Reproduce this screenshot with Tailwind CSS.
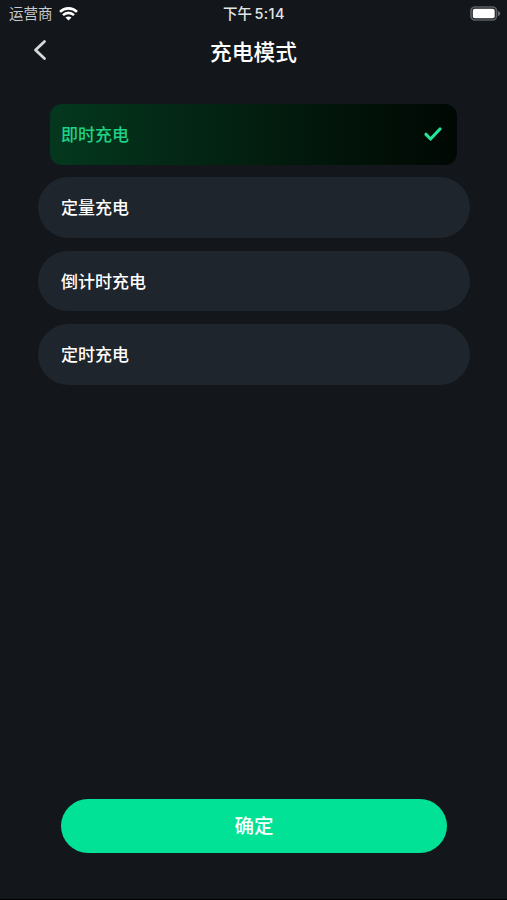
<!DOCTYPE html>
<html lang="zh-CN">
<head>
    <meta charset="UTF-8">
    <meta name="viewport" content="width=device-width, initial-scale=1.0">
    <title>充电模式</title>
    <script src="https://cdn.jsdelivr.net/npm/@tailwindcss/browser@4"></script>
</head>
<body class="bg-[#13171b] text-white font-['Inter','Noto_Sans_CJK_SC',sans-serif] h-screen overflow-hidden flex flex-col border-b border-black">

    <!-- status bar -->
    <div class="grid grid-cols-3 items-center h-[27px] pl-[9px] pr-[6px] text-[14.5px] leading-none shrink-0">
        <div class="flex items-center gap-[6px] text-[#c9cbcd]">
            <span class="pt-[2px]">运营商</span>
            <svg class="w-[19px] h-[14px]" viewBox="0 0 19 14" fill="none" stroke="#fff" stroke-width="2.6">
                <path d="M1 4.9C5.8.2 13.2.2 18 4.9" />
                <path d="M4 8.1c3.1-3 7.9-3 11 0" />
                <path d="M9.5 13.5 6.5 10.5c1.7-1.5 4.3-1.5 6 0z" fill="#fff" stroke="none" />
            </svg>
        </div>
        <time class="text-center text-[#e4e5e6] font-medium text-[14.5px] pt-[2px] pr-[2px] whitespace-nowrap">下午<span class="-ml-[2px] tracking-[0.4px]"> 5:14</span></time>
        <svg class="w-[31px] h-[15px] justify-self-end" viewBox="0 0 31 15">
            <rect x="1" y="1" width="25.5" height="13" rx="4" fill="none" stroke="#5c5f62" stroke-width="1.7" />
            <rect x="2.8" y="2.8" width="21.9" height="9.4" rx="2" fill="#fff" />
            <path d="M28 5v5c1.5-.5 2.3-1.4 2.3-2.5S29.5 5.5 28 5z" fill="#696c6f" />
        </svg>
    </div>

    <!-- nav -->
    <header class="grid grid-cols-[60px_1fr_60px] items-center h-[50px] shrink-0">
        <button type="button" class="pl-[33px] pb-1">
            <svg class="w-[14px] h-[22px]" viewBox="0 0 14 22" fill="none" stroke="#d6d8d9" stroke-width="2.8" stroke-linecap="round" stroke-linejoin="round">
                <path d="M11.5 2.5 2.5 11l9 8.5" />
            </svg>
        </button>
        <h1 class="text-center text-[21.7px] font-medium leading-none pt-[2px]">充电模式</h1>
    </header>

    <!-- charging modes -->
    <ul class="flex flex-col gap-[12.7px] mt-[27px] pl-[38px] pr-[37px] text-[17px] font-medium leading-none
        [&>li]:flex
        [&>li]:items-center
        [&>li]:h-[60.7px]
        [&>li]:pt-[2px]
    ">
        <li class="ml-3 mr-[13px] pl-[11px] pr-[15px] justify-between rounded-[12px] bg-linear-to-r from-[#04381e] to-[#010804] text-[#1fd286]">
            即时充电
            <svg class="w-[18px] h-[14px] mb-[2px]" viewBox="0 0 18 14" fill="none" stroke="#25e297" stroke-width="3.2" stroke-linecap="round" stroke-linejoin="round">
                <path d="M2 7.3 6.5 12 16 2" />
            </svg>
        </li>
        <li class="pl-[23px] rounded-full bg-[#1f252c]">定量充电</li>
        <li class="pl-[23px] rounded-full bg-[#1f252c]">倒计时充电</li>
        <li class="pl-[23px] rounded-full bg-[#1f252c]">定时充电</li>
    </ul>

    <button type="button" class="mt-auto ml-[61px] mr-[60px] mb-[46.5px] h-[54px] pt-[3px] shrink-0 rounded-full bg-[#02e296] text-[19.5px] font-medium leading-none">确定</button>
</body>
</html>
